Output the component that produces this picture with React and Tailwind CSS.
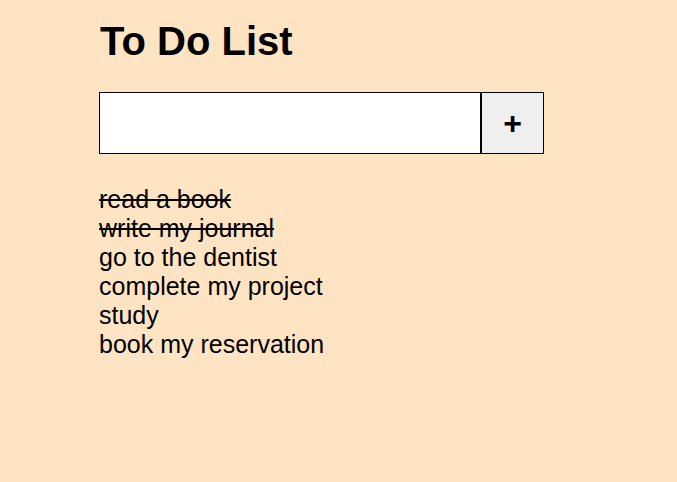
import React, { useState } from 'react';

const initialTodos = [
    { text: 'read a book', done: true },
    { text: 'write my journal', done: true },
    { text: 'go to the dentist', done: false },
    { text: 'complete my project', done: false },
    { text: 'study', done: false },
    { text: 'book my reservation', done: false },
];

const App = () => {
    const [todos, setTodos] = useState(initialTodos);
    const [input, setInput] = useState('');

    const addTodo = () => {
        if (!input.trim()) return;
        setTodos([...todos, { text: input.trim(), done: false }]);
        setInput('');
    };

    const toggle = (i) => {
        setTodos(todos.map((t, idx) => (idx === i ? { ...t, done: !t.done } : t)));
    };

    return (
        <div className="min-h-screen bg-[#ffe4c4] text-black font-['Liberation_Sans',Arial,sans-serif]">
            <div className="pl-[99px] pt-[18px]">
                <h1 className="text-[40px] leading-[46px] font-bold pl-px">To Do List</h1>

                {/* Input row */}
                <div className="flex mt-[28px]">
                    <input
                        type="text"
                        value={input}
                        onChange={(e) => setInput(e.target.value)}
                        className="w-[382px] h-[62px] border border-black bg-white px-2 text-2xl outline-none"
                    />
                    <button
                        onClick={addTodo}
                        className="w-[63px] h-[62px] border border-black bg-[#efefef] text-[32px] font-bold leading-none flex items-center justify-center"
                    >
                        +
                    </button>
                </div>

                {/* Todo list */}
                <ul className="mt-[31px] text-[25px] leading-[29px]">
                    {todos.map((t, i) => (
                        <li
                            key={i}
                            onClick={() => toggle(i)}
                            className={t.done ? 'line-through decoration-2 cursor-pointer' : 'cursor-pointer'}
                        >
                            {t.text}
                        </li>
                    ))}
                </ul>
            </div>
        </div>
    );
};

export default App;
